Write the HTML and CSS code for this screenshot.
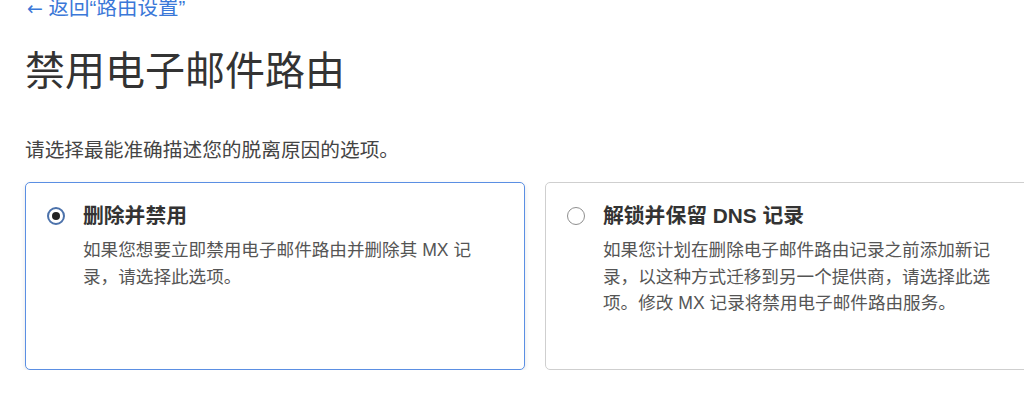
FILE: index.html
```html
<!DOCTYPE html>
<html lang="zh-CN">
<head>
<meta charset="utf-8">
<title>禁用电子邮件路由</title>
<link rel="stylesheet" href="styles.css">
</head>
<body>
<div class="page">
  <a class="back" href="#"><span class="arrow">←</span> 返回“路由设置”</a>
  <h1 class="title">禁用电子邮件路由</h1>
  <p class="lead">请选择最能准确描述您的脱离原因的选项。</p>
  <div class="options">
    <label class="option selected">
      <span class="radio checked"></span>
      <span class="option-body">
        <span class="option-title">删除并禁用</span>
        <span class="option-desc">如果您想要立即禁用电子邮件路由并删除其 MX 记录，请选择此选项。</span>
      </span>
    </label>
    <label class="option">
      <span class="radio"></span>
      <span class="option-body">
        <span class="option-title">解锁并保留 DNS 记录</span>
        <span class="option-desc">如果您计划在删除电子邮件路由记录之前添加新记录，以这种方式迁移到另一个提供商，请选择此选项。修改 MX 记录将禁用电子邮件路由服务。</span>
      </span>
    </label>
  </div>
</div>
</body>
</html>
```

FILE: styles.css
```css
html, body {
  margin: 0;
  padding: 0;
  overflow: hidden;
  background: #ffffff;
}

body {
  font-family: "Liberation Sans", "Noto Sans CJK SC", sans-serif;
  color: #333333;
}

.page {
  padding: 0 0 0 25px;
  margin-top: -4px;
}

.back {
  display: block;
  font-size: 20.5px;
  line-height: 24px;
  color: #3b78d8;
  text-decoration: none;
}

.arrow {
  font-family: "DejaVu Sans", sans-serif;
  font-size: 19px;
  margin-left: 2px;
}

.title {
  margin: 27px 0 0 0;
  font-size: 40px;
  line-height: 48px;
  font-weight: 400;
  color: #333333;
}

.lead {
  margin: 41px 0 0 0;
  font-size: 19.7px;
  line-height: 28px;
  color: #444444;
}

.options {
  display: flex;
  gap: 20px;
  margin-top: 18px;
}

.option {
  flex: 0 0 500px;
  box-sizing: border-box;
  height: 188px;
  display: flex;
  align-items: flex-start;
  padding: 19px 20px 0 21px;
  border: 1.5px solid #cfcfcf;
  border-radius: 5px;
  background: #ffffff;
}

.option.selected {
  border-color: #5b8fe3;
  box-shadow: 0 2px 5px rgba(0, 0, 0, 0.10);
}

.radio {
  flex: 0 0 auto;
  box-sizing: border-box;
  width: 18px;
  height: 18px;
  margin-top: 5px;
  border: 1.5px solid #8f8f8f;
  border-radius: 50%;
  display: flex;
  align-items: center;
  justify-content: center;
}

.radio.checked {
  border: 2px solid #4c72ab;
}

.radio.checked::after {
  content: "";
  width: 8px;
  height: 8px;
  border-radius: 50%;
  background: #222222;
}

.option-body {
  display: flex;
  flex-direction: column;
  margin-left: 18px;
}

.option-title {
  font-size: 20.8px;
  line-height: 28px;
  font-weight: 700;
  color: #333333;
}

.option-desc {
  margin-top: 7px;
  width: 396px;
  font-size: 17.6px;
  line-height: 26.5px;
  color: #555555;
}
```
